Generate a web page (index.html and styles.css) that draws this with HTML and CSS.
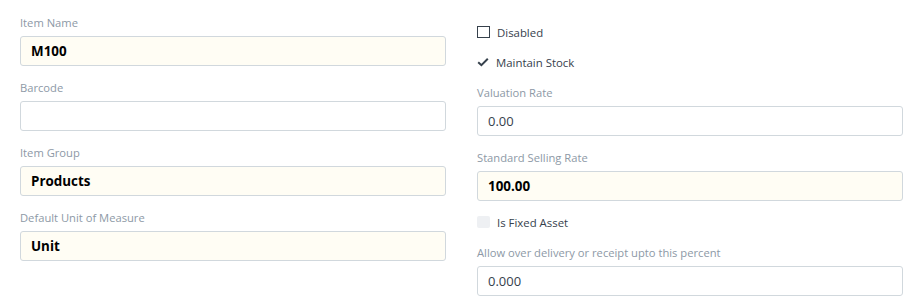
FILE: index.html
```html
<!DOCTYPE html>
<html>
<head>
  <meta charset="UTF-8" />
  <title>Item</title>
  <link rel="stylesheet" href="styles.css">
</head>
<body>

<div class="form-section">
  <!-- Left column -->
  <div class="form-column column-left">
    <div class="field">
      <div class="field-label">Item Name</div>
      <div class="field-input filled">M100</div>
    </div>
    <div class="field">
      <div class="field-label">Barcode</div>
      <div class="field-input"></div>
    </div>
    <div class="field">
      <div class="field-label">Item Group</div>
      <div class="field-input filled">Products</div>
    </div>
    <div class="field">
      <div class="field-label">Default Unit of Measure</div>
      <div class="field-input filled">Unit</div>
    </div>
  </div>

  <!-- Right column -->
  <div class="form-column column-right">
    <div class="check">
      <span class="check-box"></span>
      <span class="check-label">Disabled</span>
    </div>
    <div class="check">
      <svg class="check-mark" width="12" height="12" viewBox="0 0 12 12">
        <polyline points="1.2,6.2 4.4,9.2 10.8,2.8" fill="none" stroke="#36414c" stroke-width="2" />
      </svg>
      <span class="check-label">Maintain Stock</span>
    </div>
    <div class="field">
      <div class="field-label">Valuation Rate</div>
      <div class="field-input">0.00</div>
    </div>
    <div class="field">
      <div class="field-label">Standard Selling Rate</div>
      <div class="field-input filled">100.00</div>
    </div>
    <div class="check">
      <span class="check-box disabled"></span>
      <span class="check-label">Is Fixed Asset</span>
    </div>
    <div class="field">
      <div class="field-label">Allow over delivery or receipt upto this percent</div>
      <div class="field-input">0.000</div>
    </div>
  </div>
</div>

</body>
</html>
```

FILE: styles.css
```css
/* Page base */
body {
  margin: 0;
  background: #ffffff;
  font-family: "Open Sans", "Noto Sans", sans-serif;
  color: #36414c;
}

/* Two equal columns */
.form-section {
  display: grid;
  grid-template-columns: 426px 426px;
  column-gap: 31px;
  padding: 0 18px 0 20px;
}

.form-column {
  display: flex;
  flex-direction: column;
}

.column-left {
  padding-top: 14px;
}

.column-right {
  padding-top: 17px;
}

/* Spacing between rows */
.field + .field {
  margin-top: 13px;
}

.check + .field {
  margin-top: 7px;
}

.field + .check {
  margin-top: 6px;
}

/* Labels above inputs */
.field-label {
  height: 18px;
  line-height: 18px;
  font-size: 11.2px;
  color: #8d99a6;
  margin-bottom: 4px;
  white-space: nowrap;
}

/* Input boxes */
.field-input {
  box-sizing: border-box;
  height: 30px;
  line-height: 28px;
  padding: 0 10px;
  border: 1px solid #d1d8dd;
  border-radius: 3px;
  background: #ffffff;
  font-size: 13px;
  color: #36414c;
}

/* Mandatory fields with a value */
.field-input.filled {
  background: #fffdf4;
  font-size: 13.4px;
  font-weight: bold;
  color: #000000;
}

/* Checkbox rows */
.check {
  display: flex;
  align-items: center;
  height: 30px;
}

.check-box {
  box-sizing: border-box;
  width: 13px;
  height: 12px;
  border: 1px solid #36414c;
  margin-right: 7px;
}

.check-box.disabled {
  border: none;
  border-radius: 2px;
  background: #eef0f3;
}

.check-mark {
  margin-right: 7px;
}

.check-label {
  font-size: 11.4px;
  color: #36414c;
}
```
